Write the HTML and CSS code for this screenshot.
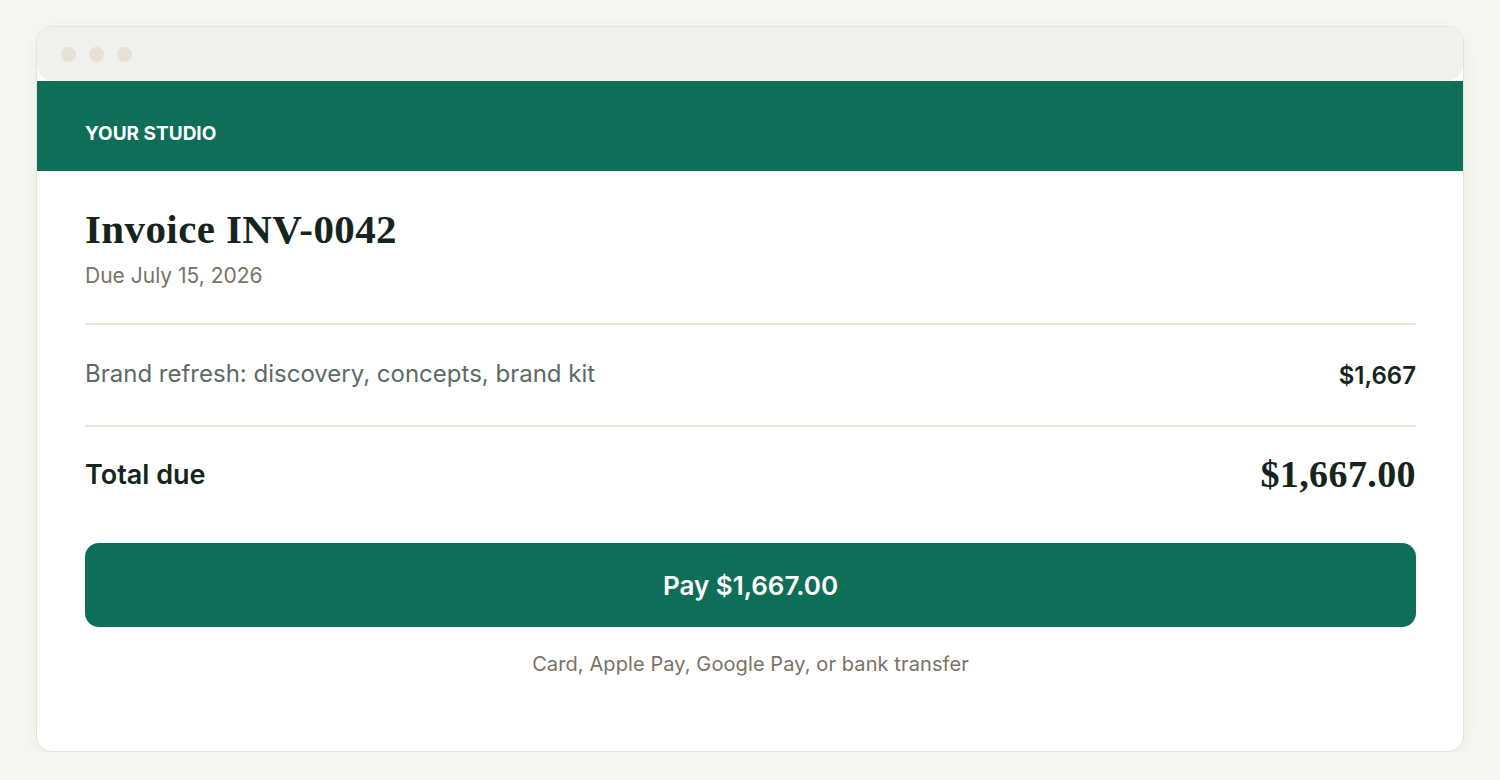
FILE: index.html
```html
<!DOCTYPE html>
<html lang="en">
<head>
  <meta charset="UTF-8">
  <title>Invoice INV-0042</title>
  <link rel="stylesheet" href="styles.css">
</head>
<body>
  <div class="window">
    <div class="titlebar">
      <span class="dot"></span>
      <span class="dot"></span>
      <span class="dot"></span>
    </div>
    <div class="brand">YOUR STUDIO</div>
    <div class="invoice">
      <h1>Invoice INV-0042</h1>
      <p class="due">Due July 15, 2026</p>

      <div class="line-item">
        <span class="desc">Brand refresh: discovery, concepts, brand kit</span>
        <span class="amount">$1,667</span>
      </div>

      <div class="total">
        <span class="total-label">Total due</span>
        <span class="total-amount">$1,667.00</span>
      </div>

      <button class="pay">Pay $1,667.00</button>
      <p class="methods">Card, Apple Pay, Google Pay, or bank transfer</p>
    </div>
  </div>
</body>
</html>
```

FILE: styles.css
```css
body {
  margin: 0;
  padding: 26px 36px 0;
  background-color: #f7f7f3;
  font-family: Inter, "Noto Sans", sans-serif;
  color: #16241e;
}

.window {
  height: 726px;
  box-sizing: border-box;
  background-color: #fff;
  border: 1px solid #e6e2d8;
  border-radius: 16px;
  box-shadow: 0 4px 24px rgba(60, 60, 40, 0.06);
  overflow: hidden;
}

.titlebar {
  height: 54px;
  background-color: #f0f1ec;
  border-radius: 16px;
  display: flex;
  align-items: center;
  gap: 13px;
  padding-left: 24px;
}

.dot {
  width: 15px;
  height: 15px;
  border-radius: 50%;
  background-color: #e6e0d6;
}

.brand {
  height: 90px;
  box-sizing: border-box;
  padding: 14px 0 0 48px;
  background-color: #0f6e58;
  color: #fff;
  font-size: 19px;
  font-weight: 700;
  display: flex;
  align-items: center;
}

.invoice {
  padding: 0 47px 0 48px;
}

h1 {
  margin: 36px 0 0;
  font-family: "Liberation Serif", serif;
  font-size: 41px;
  font-weight: 700;
  letter-spacing: 0.4px;
  line-height: 44px;
}

.due {
  margin: 12px 0 0;
  font-size: 21px;
  color: #7a7266;
}

.line-item,
.total {
  display: flex;
  justify-content: space-between;
  align-items: center;
}

.line-item {
  margin-top: 35px;
  height: 100px;
  border-top: 2px solid #e8e5dc;
  border-bottom: 2px solid #e8e5dc;
}

.desc {
  font-size: 24px;
  color: #5c6b65;
  margin-top: -3px;
}

.amount {
  font-size: 24px;
  font-weight: 600;
}

.total {
  height: 94px;
}

.total-label {
  font-size: 27px;
  font-weight: 600;
}

.total-amount {
  font-family: "Liberation Serif", serif;
  font-size: 38px;
  font-weight: 700;
  letter-spacing: 0.4px;
}

.pay {
  display: block;
  width: 100%;
  height: 84px;
  margin-top: 22px;
  border: none;
  border-radius: 14px;
  background-color: #0f6e58;
  color: #fff;
  font-family: Inter, sans-serif;
  font-size: 26px;
  font-weight: 600;
  cursor: pointer;
}

.methods {
  margin: 25px 0 0;
  text-align: center;
  font-size: 20px;
  letter-spacing: 0.1px;
  color: #7a7266;
}
```
